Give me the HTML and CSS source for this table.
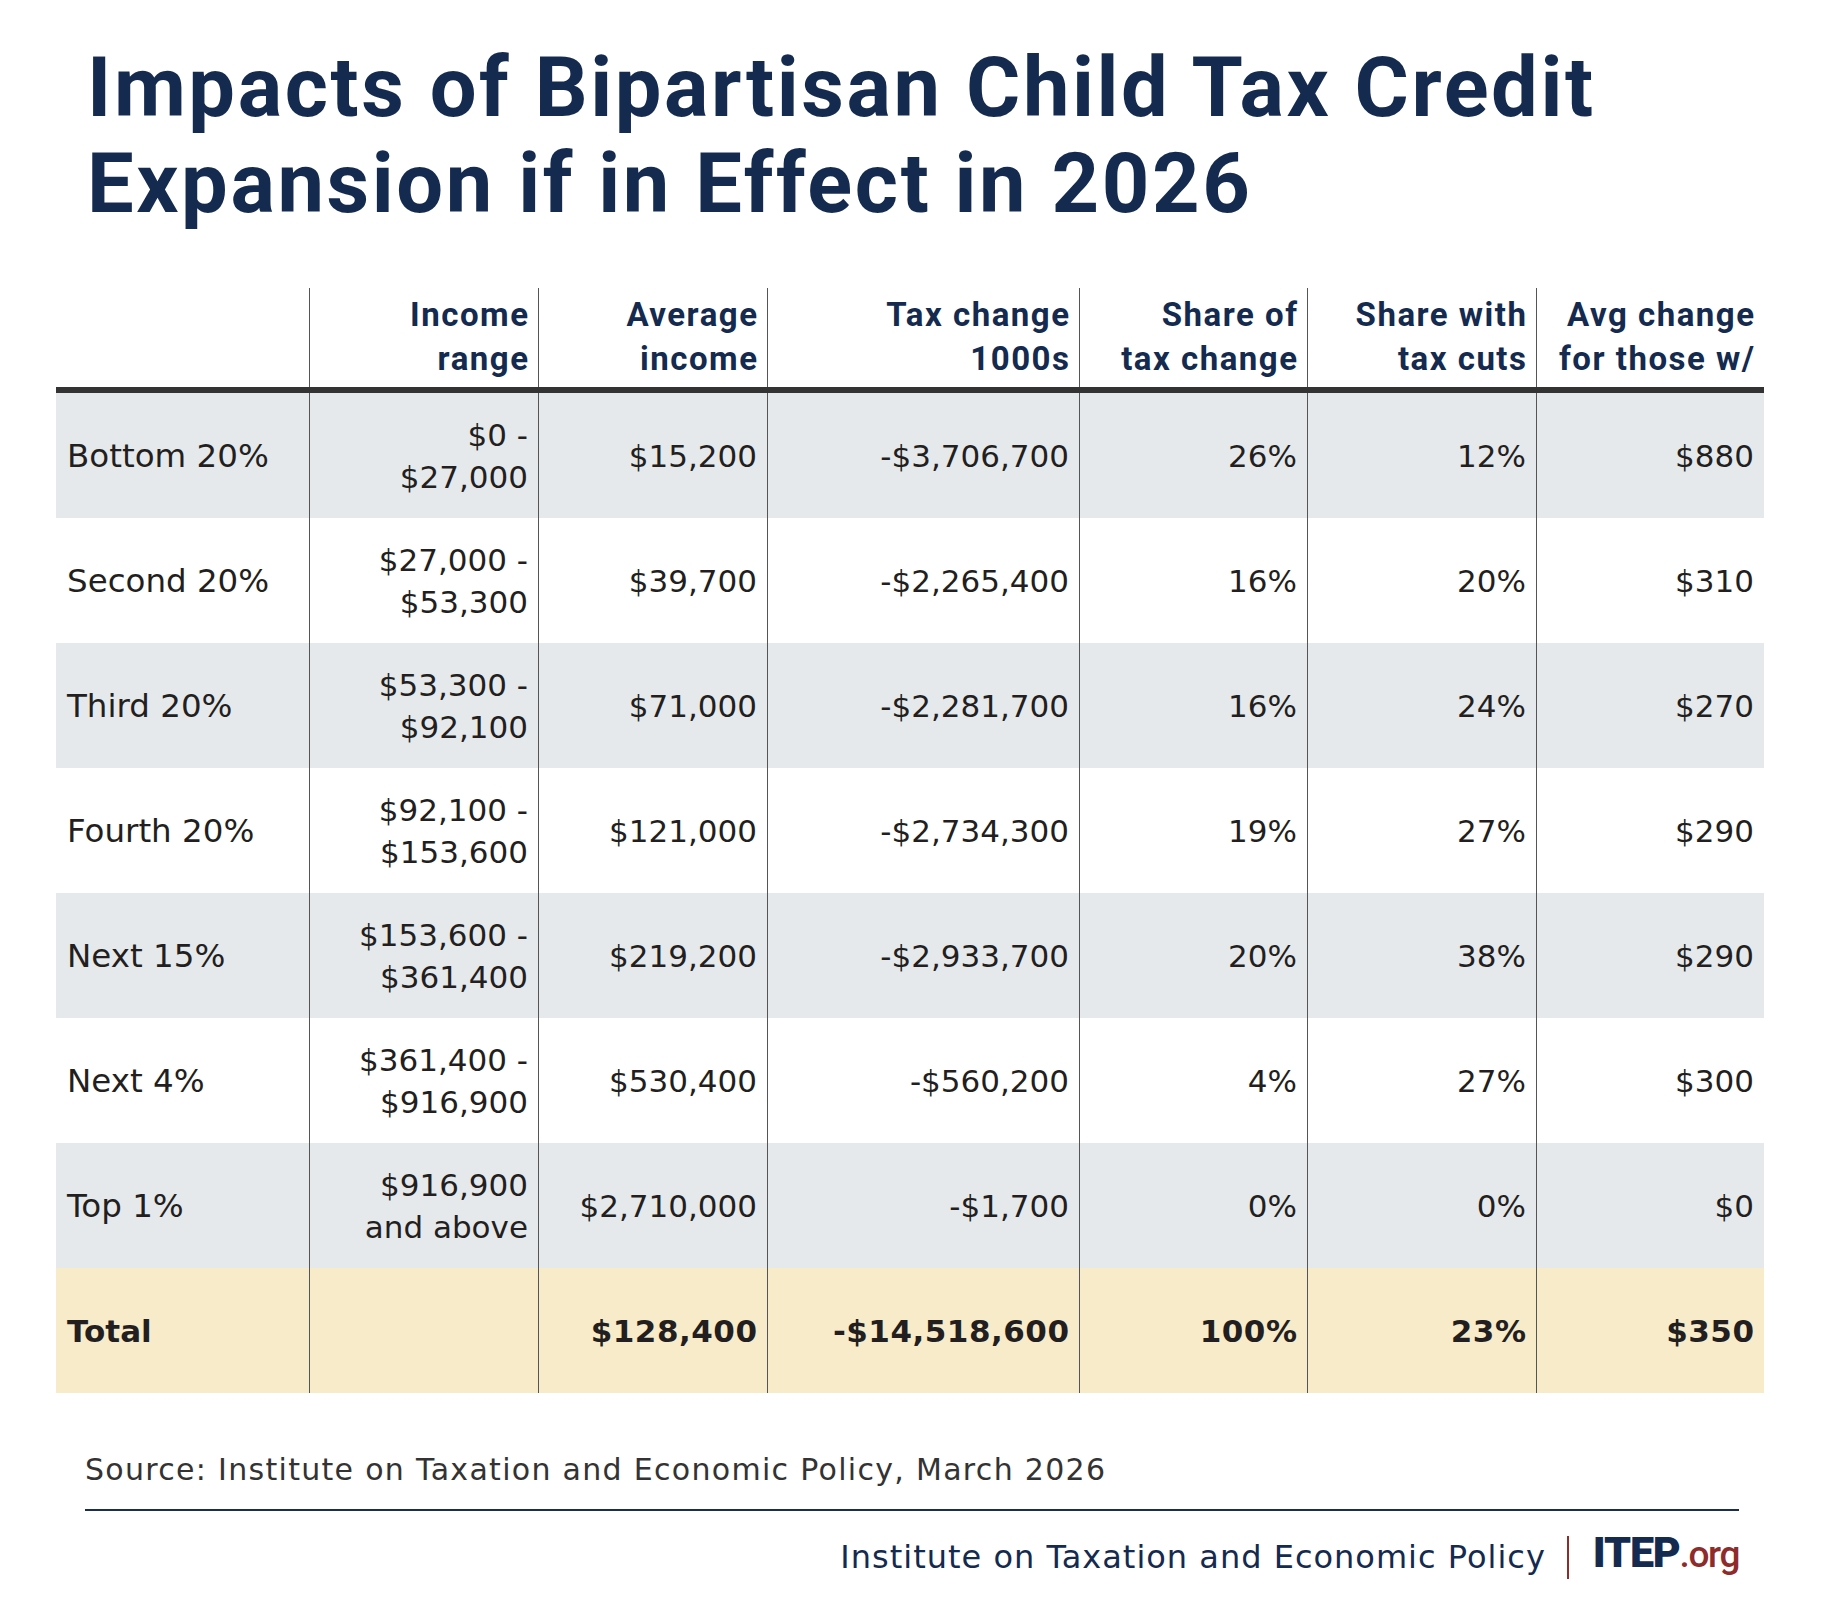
FILE: index.html
```html
<!DOCTYPE html>
<html lang="en">
<head>
<meta charset="utf-8">
<title>Impacts of Bipartisan Child Tax Credit Expansion</title>
<link rel="stylesheet" href="styles.css">
</head>
<body>
<div class="page">
  <h1 class="title">Impacts of Bipartisan Child Tax Credit<br>Expansion if in Effect in 2026</h1>

  <div class="table">
    <div class="row head">
      <div class="cell first"></div>
      <div class="cell">Income<br>range</div>
      <div class="cell">Average<br>income</div>
      <div class="cell">Tax change<br>1000s</div>
      <div class="cell">Share of<br>tax change</div>
      <div class="cell">Share with<br>tax cuts</div>
      <div class="cell">Avg change<br>for those w/</div>
    </div>
    <div class="row shade">
      <div class="cell first">Bottom 20%</div>
      <div class="cell">$0 -<br>$27,000</div>
      <div class="cell">$15,200</div>
      <div class="cell">-$3,706,700</div>
      <div class="cell">26%</div>
      <div class="cell">12%</div>
      <div class="cell">$880</div>
    </div>
    <div class="row">
      <div class="cell first">Second 20%</div>
      <div class="cell">$27,000 -<br>$53,300</div>
      <div class="cell">$39,700</div>
      <div class="cell">-$2,265,400</div>
      <div class="cell">16%</div>
      <div class="cell">20%</div>
      <div class="cell">$310</div>
    </div>
    <div class="row shade">
      <div class="cell first">Third 20%</div>
      <div class="cell">$53,300 -<br>$92,100</div>
      <div class="cell">$71,000</div>
      <div class="cell">-$2,281,700</div>
      <div class="cell">16%</div>
      <div class="cell">24%</div>
      <div class="cell">$270</div>
    </div>
    <div class="row">
      <div class="cell first">Fourth 20%</div>
      <div class="cell">$92,100 -<br>$153,600</div>
      <div class="cell">$121,000</div>
      <div class="cell">-$2,734,300</div>
      <div class="cell">19%</div>
      <div class="cell">27%</div>
      <div class="cell">$290</div>
    </div>
    <div class="row shade">
      <div class="cell first">Next 15%</div>
      <div class="cell">$153,600 -<br>$361,400</div>
      <div class="cell">$219,200</div>
      <div class="cell">-$2,933,700</div>
      <div class="cell">20%</div>
      <div class="cell">38%</div>
      <div class="cell">$290</div>
    </div>
    <div class="row">
      <div class="cell first">Next 4%</div>
      <div class="cell">$361,400 -<br>$916,900</div>
      <div class="cell">$530,400</div>
      <div class="cell">-$560,200</div>
      <div class="cell">4%</div>
      <div class="cell">27%</div>
      <div class="cell">$300</div>
    </div>
    <div class="row shade">
      <div class="cell first">Top 1%</div>
      <div class="cell">$916,900<br>and above</div>
      <div class="cell">$2,710,000</div>
      <div class="cell">-$1,700</div>
      <div class="cell">0%</div>
      <div class="cell">0%</div>
      <div class="cell">$0</div>
    </div>
    <div class="row total">
      <div class="cell first">Total</div>
      <div class="cell"></div>
      <div class="cell">$128,400</div>
      <div class="cell">-$14,518,600</div>
      <div class="cell">100%</div>
      <div class="cell">23%</div>
      <div class="cell">$350</div>
    </div>
  </div>

  <p class="source">Source: Institute on Taxation and Economic Policy, March 2026</p>

  <div class="footer">
    <span class="footer-name">Institute on Taxation and Economic Policy</span>
    <span class="footer-bar"></span>
    <span class="logo"><span class="logo-itep">ITEP</span><span class="logo-org">.org</span></span>
  </div>
</div>
</body>
</html>
```

FILE: styles.css
```css
* { box-sizing: border-box; }

html, body {
  margin: 0;
  padding: 0;
  background: #ffffff;
}

.page {
  width: 1823px;
  height: 1601px;
  overflow: hidden;
  font-family: "DejaVu Sans", "Open Sans", sans-serif;
  color: #231f20;
}

.title {
  margin: 40px 0 0 87px;
  font-family: "Roboto", "Liberation Sans", sans-serif;
  font-weight: 700;
  font-size: 83px;
  line-height: 96px;
  color: #142a4e;
  letter-spacing: 2.6px;
}

.table {
  margin: 56px 0 0 56px;
  width: 1708px;
}

.row {
  display: grid;
  grid-template-columns: 253px 229px 229px 312px 228px 229px 228px;
  height: 125px;
}

.row.shade { background: #e6e9ec; }
.row.total { background: #f8ebca; }

.cell {
  display: flex;
  align-items: center;
  justify-content: flex-end;
  text-align: right;
  padding: 0 10px 0 10px;
  border-left: 1px solid #555555;
  font-size: 31px;
  line-height: 42px;
  white-space: nowrap;
}

.cell.first {
  border-left: none;
  justify-content: flex-start;
  text-align: left;
  padding-left: 11px;
  font-size: 32.5px;
}

.row.head {
  height: 105px;
  border-bottom: 6px solid #333333;
}

.row.head .cell {
  align-items: flex-end;
  padding-bottom: 6px;
  padding-right: 8.5px;
  font-family: "Roboto", "Liberation Sans", sans-serif;
  font-weight: 700;
  font-size: 33px;
  line-height: 44px;
  letter-spacing: 1.5px;
  color: #142a4e;
}

.row.total .cell {
  font-weight: 700;
  letter-spacing: 0.5px;
  padding-right: 9.5px;
}

.row.total .cell.first {
  font-size: 31px;
  letter-spacing: 0;
}

.source {
  margin: 57px 0 0 85px;
  font-size: 30px;
  line-height: 40px;
  letter-spacing: 1.3px;
  color: #333333;
  width: 1654px;
  padding-bottom: 19px;
  border-bottom: 2px solid #1b2e4f;
  white-space: nowrap;
}

.footer {
  display: flex;
  justify-content: flex-end;
  align-items: center;
  width: 1739px;
  height: 92px;
}

.footer-name {
  font-size: 32px;
  letter-spacing: 1px;
  color: #142a4e;
  white-space: nowrap;
}

.footer-bar {
  width: 2px;
  height: 43px;
  background: #8e2b2b;
  margin: 0 24px 0 21px;
}

.logo {
  font-family: "Roboto", "Liberation Sans", sans-serif;
  line-height: 44px;
  white-space: nowrap;
}

.logo-itep {
  font-size: 43px;
  font-weight: 900;
  letter-spacing: -1.2px;
  color: #142a4e;
}

.logo-org {
  font-size: 37px;
  font-weight: 500;
  letter-spacing: -1.4px;
  color: #8e2b2b;
}
```
